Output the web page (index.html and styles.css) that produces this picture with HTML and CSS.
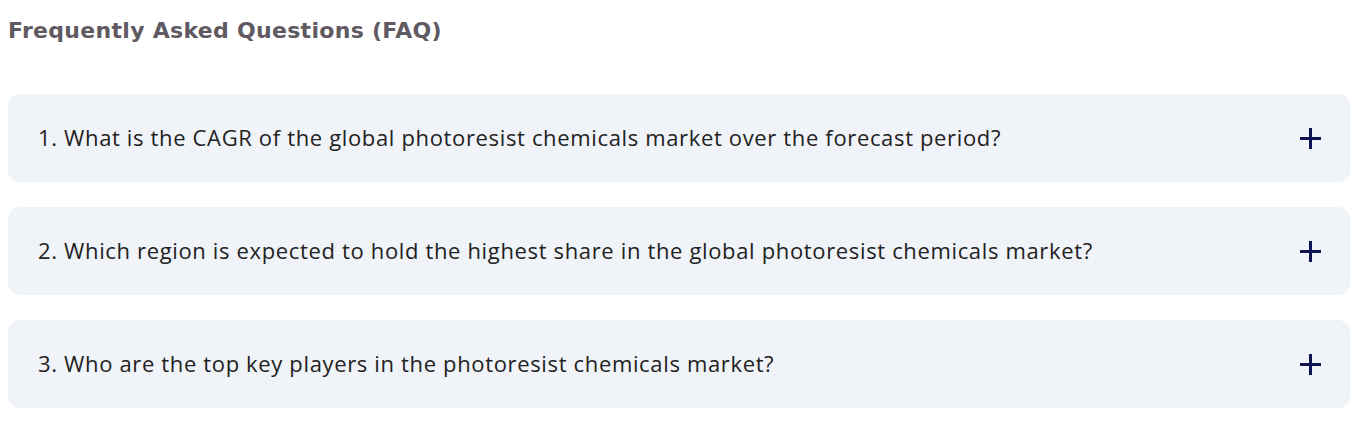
FILE: index.html
```html
<!DOCTYPE html>
<html lang="en">
<head>
<meta charset="utf-8">
<link rel="stylesheet" href="styles.css">
</head>
<body>
<section class="faq">
  <h2 class="faq-title">Frequently Asked Questions (FAQ)</h2>
  <div class="faq-list">
    <div class="faq-item">
      <span class="faq-q">1. What is the CAGR of the global photoresist chemicals market over the forecast period?</span>
      <svg class="faq-plus" width="21" height="21" viewBox="0 0 21 21"><path d="M10.5 0V21M0 10.5H21" stroke="#0d1450" stroke-width="3"/></svg>
    </div>
    <div class="faq-item">
      <span class="faq-q">2. Which region is expected to hold the highest share in the global photoresist chemicals market?</span>
      <svg class="faq-plus" width="21" height="21" viewBox="0 0 21 21"><path d="M10.5 0V21M0 10.5H21" stroke="#0d1450" stroke-width="3"/></svg>
    </div>
    <div class="faq-item">
      <span class="faq-q">3. Who are the top key players in the photoresist chemicals market?</span>
      <svg class="faq-plus" width="21" height="21" viewBox="0 0 21 21"><path d="M10.5 0V21M0 10.5H21" stroke="#0d1450" stroke-width="3"/></svg>
    </div>
  </div>
</section>
</body>
</html>
```
FILE: styles.css
```css
html, body { margin: 0; padding: 0; background: #fff; }
.faq { padding: 0 16px 0 8px; }
.faq-title {
  margin: 0;
  padding-top: 16px;
  height: 94px;
  box-sizing: border-box;
  font-family: "DejaVu Sans", sans-serif;
  font-weight: 700;
  font-size: 22px;
  letter-spacing: 0.3px;
  line-height: 30px;
  color: #5f5a62;
}
.faq-list { display: flex; flex-direction: column; gap: 25px; }
.faq-item {
  display: flex;
  align-items: center;
  justify-content: space-between;
  height: 88px;
  box-sizing: border-box;
  padding: 0 29px 0 30px;
  background: #f0f3f8;
  border-radius: 12px;
}
.faq-q {
  font-family: "Open Sans", sans-serif;
  font-size: 22px;
  letter-spacing: 0.65px;
  line-height: 30px;
  padding-bottom: 3px;
  color: #222;
}
.faq-plus { flex: none; }
```
